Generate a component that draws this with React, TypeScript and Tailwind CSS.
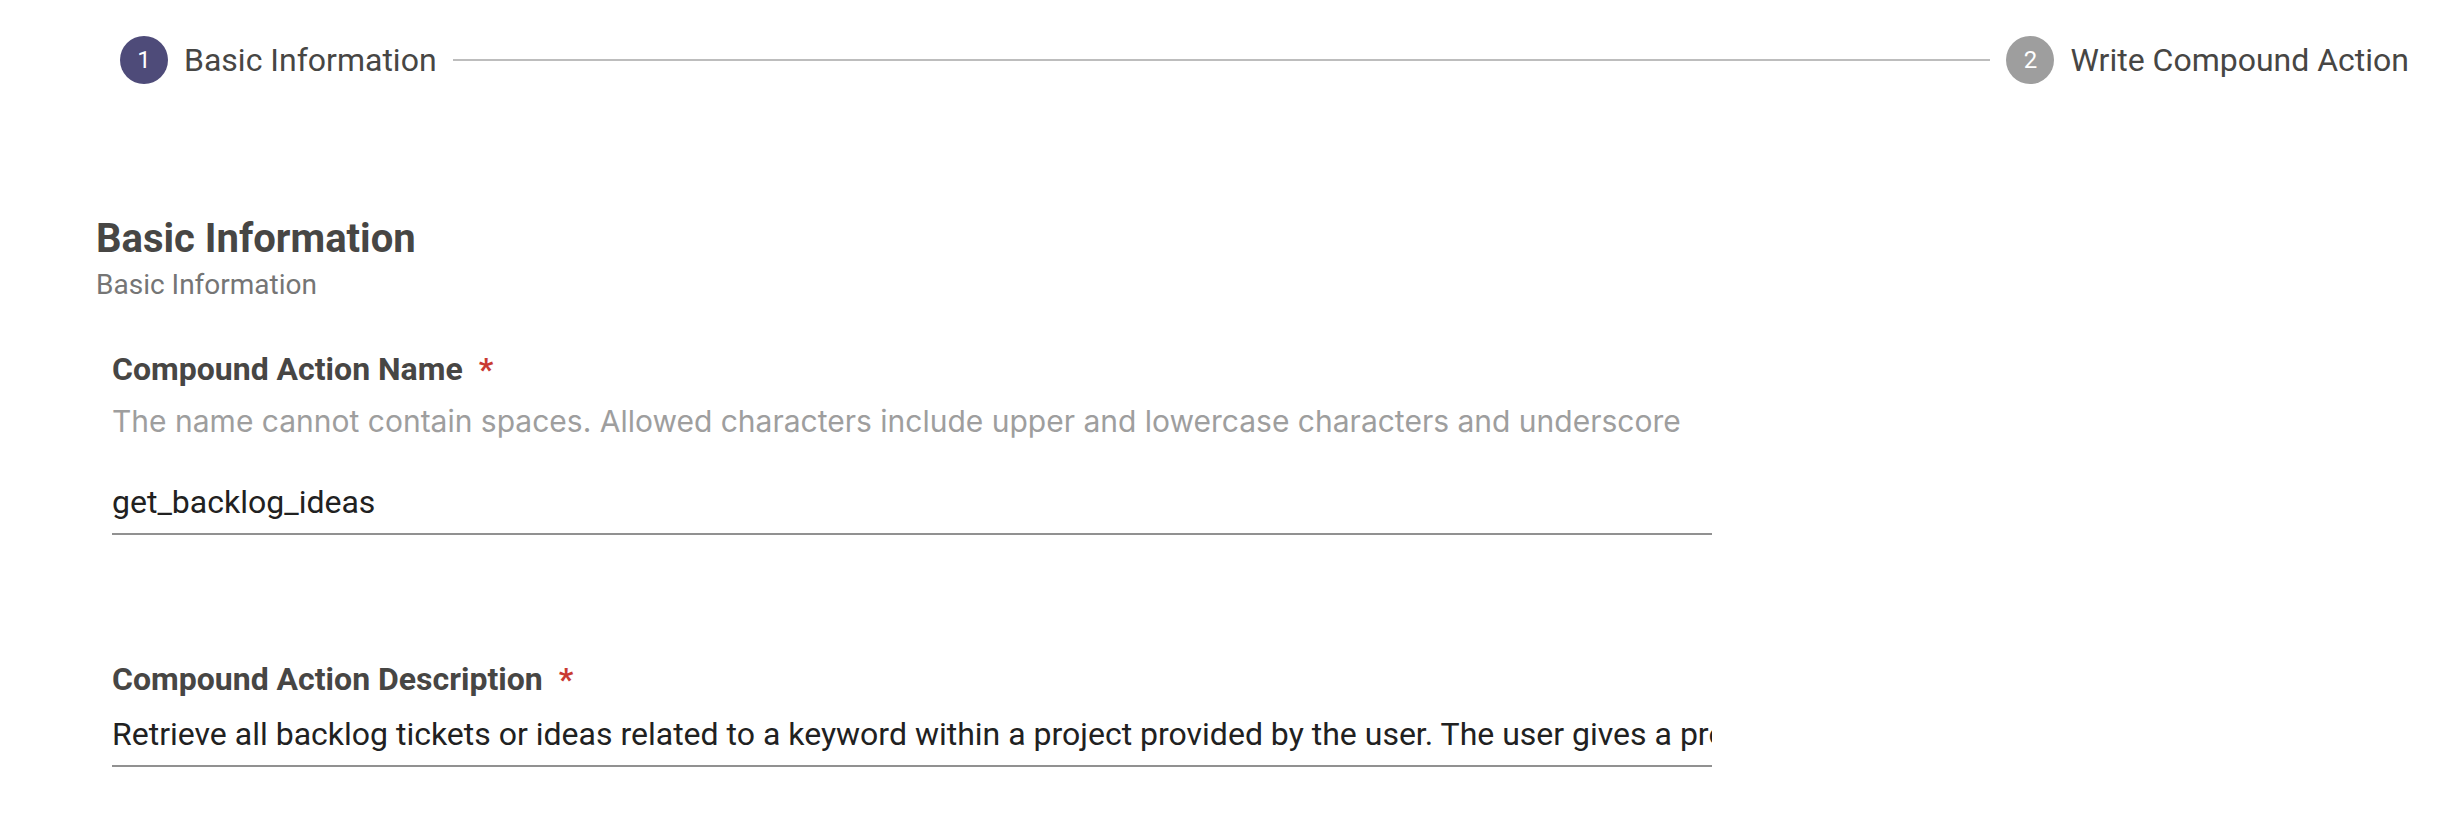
import { useState } from "react";

type FieldProps = {
  id: string;
  label: string;
  hint?: string;
  initial: string;
};

function Step({ number, label, active }: { number: number; label: string; active?: boolean }) {
  return (
    <li className="flex shrink-0 items-center gap-4">
      <span
        className={
          active
            ? "flex size-12 items-center justify-center rounded-full bg-[#4e4b79] text-2xl text-white"
            : "flex size-12 items-center justify-center rounded-full bg-[#9e9e9e] text-2xl text-white"
        }
      >
        {number}
      </span>
      <span className="text-[32px] leading-12 text-[#474644]">{label}</span>
    </li>
  );
}

function Field({ id, label, hint, initial }: FieldProps) {
  const [value, setValue] = useState(initial);
  return (
    <div className="flex flex-col">
      <label htmlFor={id} className="text-[32px] leading-10 font-bold text-[#474644]">
        {label}
        <span className="ml-4 text-[#c93a32]">*</span>
      </label>
      {hint && (
        <p
          id={id + "-hint"}
          className="mt-3 mb-[26px] font-['Inter',sans-serif] text-[30px] leading-10 text-[#9e9e9e]"
        >
          {hint}
        </p>
      )}
      <input
        id={id}
        value={value}
        aria-describedby={hint ? id + "-hint" : undefined}
        onChange={(e) => setValue(e.target.value)}
        className="mt-1 h-16 w-full border-b-2 border-[#919191] text-[32px] text-[#212121] outline-none"
      />
    </div>
  );
}

export default function App() {
  return (
    <main className="min-h-screen bg-white pt-9 pb-16 font-['Roboto',sans-serif]">
      <ol className="flex items-center gap-4 pr-[35px] pl-30">
        <Step number={1} label="Basic Information" active />
        <li aria-hidden="true" className="h-0.5 flex-1 bg-[#bdbdbd]" />
        <Step number={2} label="Write Compound Action" />
      </ol>
      <section className="px-24 pt-[131px]">
        <h1 className="text-[40px] leading-12 font-bold text-[#474644]">Basic Information</h1>
        <p className="mt-0.5 text-[28px] leading-10 text-[#757575]">Basic Information</p>
        <form className="flex w-full max-w-[1632px] flex-col gap-31 px-4 pt-11">
          <Field
            id="action-name"
            label="Compound Action Name"
            hint="The name cannot contain spaces. Allowed characters include upper and lowercase characters and underscore"
            initial="get_backlog_ideas"
          />
          <Field
            id="action-description"
            label="Compound Action Description"
            initial="Retrieve all backlog tickets or ideas related to a keyword within a project provided by the user. The user gives a project name and a keyword."
          />
        </form>
      </section>
    </main>
  );
}
